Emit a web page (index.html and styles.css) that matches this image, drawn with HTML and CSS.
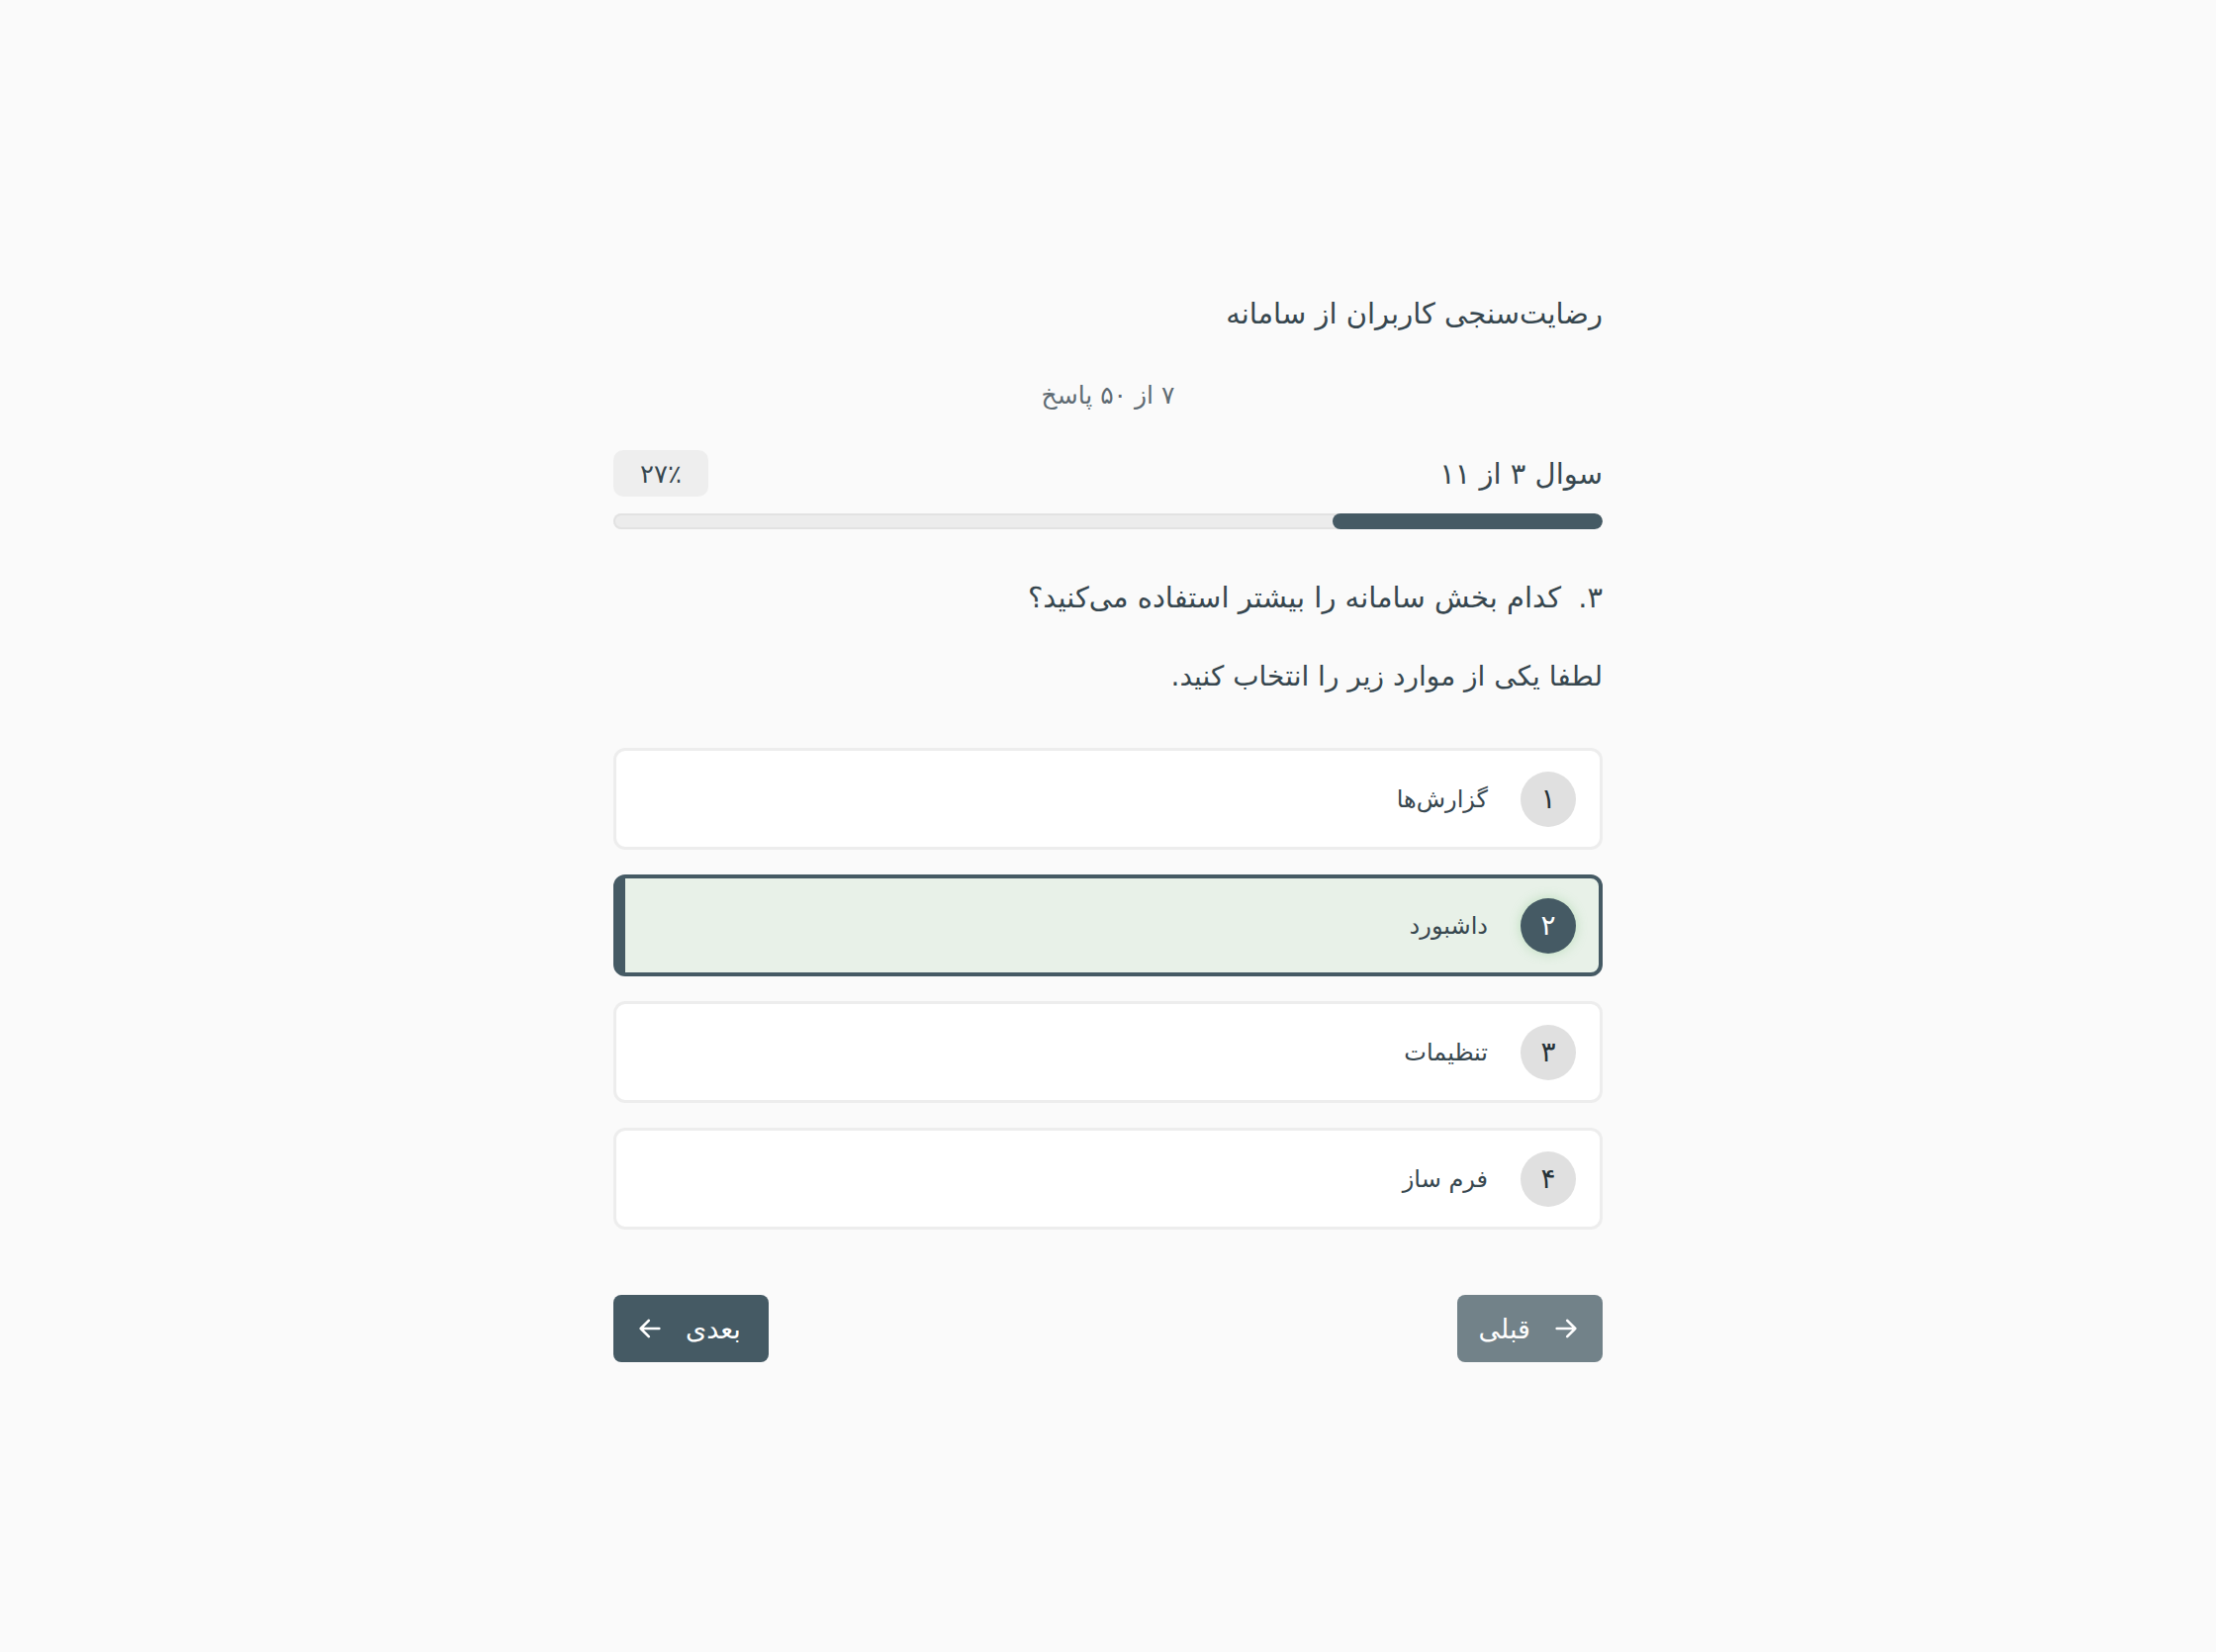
FILE: index.html
```html
<!DOCTYPE html>
<html lang="fa" dir="rtl">
<head>
    <meta charset="UTF-8">
    <title>رضایت‌سنجی کاربران از سامانه</title>
    <link rel="stylesheet" href="styles.css">
</head>
<body>

<div class="survey">
    <h1 class="survey-title">رضایت‌سنجی کاربران از سامانه</h1>
    <div class="answers-count">۷ از ۵۰ پاسخ</div>

    <div class="progress-head">
        <span class="step">سوال ۳ از ۱۱</span>
        <span class="percent">۲۷٪</span>
    </div>
    <div class="progress-bar">
        <div class="progress-fill" style="width: 27.3%"></div>
    </div>

    <h2 class="question"><span class="q-num">۳.</span> کدام بخش سامانه را بیشتر استفاده می‌کنید؟</h2>
    <p class="hint">لطفا یکی از موارد زیر را انتخاب کنید.</p>

    <div class="options">
        <div class="option">
            <span class="opt-num">۱</span>
            <span class="opt-label">گزارش‌ها</span>
        </div>
        <div class="option selected">
            <span class="opt-num">۲</span>
            <span class="opt-label">داشبورد</span>
        </div>
        <div class="option">
            <span class="opt-num">۳</span>
            <span class="opt-label">تنظیمات</span>
        </div>
        <div class="option">
            <span class="opt-num">۴</span>
            <span class="opt-label">فرم ساز</span>
        </div>
    </div>

    <div class="nav">
        <button class="btn btn-prev">
            <svg width="28" height="28" viewBox="0 0 24 24" fill="none" stroke="#fff" stroke-width="2.2" stroke-linecap="round" stroke-linejoin="round"><path d="M4 12h16M13 5l7 7-7 7"/></svg>
            <span>قبلی</span>
        </button>
        <button class="btn btn-next">
            <span>بعدی</span>
            <svg width="28" height="28" viewBox="0 0 24 24" fill="none" stroke="#fff" stroke-width="2.2" stroke-linecap="round" stroke-linejoin="round"><path d="M20 12H4M11 5l-7 7 7 7"/></svg>
        </button>
    </div>
</div>

</body>
</html>
```

FILE: styles.css
```css
body {
    margin: 0;
    padding: 0;
    background-color: #fafafa;
    color: #37474f;
    font-family: 'DejaVu Sans', sans-serif;
    direction: rtl;
}

.survey {
    width: 1000px;
    margin: 0 auto;
    padding-top: 297px;
}

.survey-title {
    margin: 0;
    font-size: 29px;
    font-weight: normal;
    line-height: 40px;
}

.answers-count {
    margin-top: 45px;
    text-align: center;
    font-size: 25px;
    line-height: 36px;
    color: #5f6b73;
}

.progress-head {
    margin-top: 37px;
    height: 47px;
    display: flex;
    justify-content: space-between;
    align-items: center;
}

.step {
    font-size: 29px;
    line-height: 40px;
}

.percent {
    width: 96px;
    height: 47px;
    border-radius: 10px;
    background: #eeeeee;
    display: flex;
    align-items: center;
    justify-content: center;
    font-size: 26px;
}

.progress-bar {
    margin-top: 17px;
    height: 16px;
    border-radius: 8px;
    background: #ececec;
    box-shadow: inset 0 0 0 2px #e2e2e2;
    overflow: hidden;
}

.progress-fill {
    height: 100%;
    background: #455a64;
    border-radius: 8px;
}

.question {
    margin: 49px 0 0;
    font-size: 29px;
    font-weight: normal;
    line-height: 40px;
}

.q-num {
    margin-left: 8px;
}

.hint {
    margin: 40px 0 0;
    font-size: 28px;
    line-height: 40px;
}

.options {
    margin-top: 52px;
    display: flex;
    flex-direction: column;
    gap: 25px;
}

.option {
    box-sizing: border-box;
    height: 103px;
    border: 3px solid #ededed;
    border-radius: 12px;
    background: #ffffff;
    display: flex;
    align-items: center;
    padding-right: 24px;
    gap: 33px;
}

.opt-num {
    width: 56px;
    height: 56px;
    border-radius: 50%;
    background: #e0e0e0;
    color: #263238;
    display: flex;
    align-items: center;
    justify-content: center;
    font-size: 28px;
}

.opt-label {
    font-size: 24px;
}

.option.selected {
    border: 4px solid #455a64;
    border-left-width: 12px;
    background: #e8f1e8;
    padding-right: 23px;
}

.option.selected .opt-num {
    background: #455a64;
    color: #ffffff;
    box-shadow: 0 0 12px rgba(102, 187, 106, 0.35);
}

.nav {
    margin-top: 66px;
    display: flex;
    justify-content: space-between;
}

.btn {
    height: 68px;
    border: none;
    border-radius: 8px;
    background: #455a64;
    color: #ffffff;
    font-family: inherit;
    font-size: 27px;
    display: flex;
    align-items: center;
    gap: 22px;
    cursor: pointer;
}

.btn-prev {
    padding: 0 23px 0 22px;
    opacity: 0.75;
}

.btn-next {
    padding: 0 28px 0 23px;
}
```
